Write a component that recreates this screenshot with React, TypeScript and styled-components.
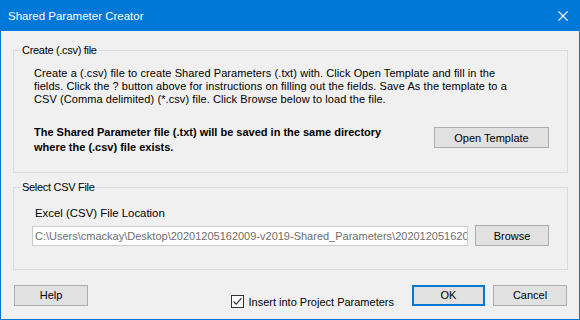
import React from "react";
import styled, { createGlobalStyle } from "styled-components";

const GlobalStyle = createGlobalStyle`
  html, body {
    margin: 0;
    padding: 0;
    background: #ffffff;
  }
  * {
    box-sizing: border-box;
  }
`;

const Window = styled.div`
  width: 580px;
  height: 320px;
  border: 1px solid #0078d7;
  background: #f0f0f0;
  display: flex;
  flex-direction: column;
  font-family: "Liberation Sans", Arial, sans-serif;
  font-size: 11px;
  color: #000;
`;

const TitleBar = styled.div`
  height: 30px;
  background: #0078d7;
  color: #fff;
  display: flex;
  align-items: center;
  justify-content: space-between;
  padding: 0 11px 0 7px;
  font-size: 11.5px;
`;

const CloseIcon = styled.svg`
  width: 10px;
  height: 10px;
`;

const Body = styled.div`
  flex: 1;
  display: flex;
  flex-direction: column;
  padding: 13px 11px 0 12px;
`;

const Group = styled.fieldset<{ $height: number; $gap?: number }>`
  margin: 0 0 ${({ $gap }) => $gap ?? 0}px 0;
  padding: 0;
  height: ${({ $height }) => $height}px;
  border: 1px solid #dcdcdc;
  min-width: 0;
`;

const Legend = styled.legend`
  margin-left: 7px;
  padding: 0 1px;
  line-height: 13px;
  font-size: 11px;
  letter-spacing: -0.3px;
`;

const GroupContent = styled.div`
  padding: 10px 18px 0 20px;
`;

const Paragraph = styled.p`
  margin: 0;
  line-height: 13px;
  white-space: nowrap;
  letter-spacing: 0.08px;
`;

const NoteRow = styled.div`
  display: flex;
  justify-content: space-between;
  align-items: flex-start;
  margin-top: 19px;
`;

const Note = styled.p`
  margin: 0;
  font-weight: bold;
  line-height: 15px;
`;

const Button = styled.button<{ $width: number; $default?: boolean }>`
  width: ${({ $width }) => $width}px;
  height: 21px;
  margin: 0;
  padding: 0;
  background: #e1e1e1;
  border: ${({ $default }) => ($default ? "2px solid #0078d7" : "1px solid #adadad")};
  font-family: "Liberation Sans", Arial, sans-serif;
  font-size: 11px;
  color: #000;
  flex-shrink: 0;
`;

const TemplateButton = styled(Button)`
  margin-top: 2px;
`;

const FieldLabel = styled.div`
  margin: 2px 0 0 1px;
  line-height: 14px;
  font-size: 11.4px;
`;

const FieldRow = styled.div`
  display: flex;
  align-items: flex-start;
  gap: 7px;
  margin-top: 5px;
`;

const PathBox = styled.div`
  width: 436px;
  height: 20px;
  margin: 1px 0 0 -2px;
  border: 1px solid #cccccc;
  background: #fff;
  color: #6d6d6d;
  padding: 0 0 0 2px;
  line-height: 18px;
  white-space: nowrap;
  overflow: hidden;
`;

const Footer = styled.div`
  display: flex;
  align-items: center;
  padding: 12px 1px 0 1px;
`;

const Spacer = styled.div`
  flex: 1;
`;

const CheckLabel = styled.label`
  display: flex;
  align-items: center;
  gap: 4px;
  margin-right: 18px;
  margin-top: 13px;
`;

const CheckBox = styled.span`
  width: 13px;
  height: 13px;
  border: 1px solid #333;
  background: #fff;
  display: flex;
  align-items: center;
  justify-content: center;
`;

const ButtonGroup = styled.div`
  display: flex;
  gap: 8px;
`;

export default function App() {
  return (
    <>
      <GlobalStyle />
      <Window>
        <TitleBar>
          <span>Shared Parameter Creator</span>
          <CloseIcon viewBox="0 0 10 10">
            <path d="M0.5 0.5 L9.5 9.5 M9.5 0.5 L0.5 9.5" stroke="#fff" strokeWidth="1.1" />
          </CloseIcon>
        </TitleBar>
        <Body>
          <Group $height={129} $gap={8}>
            <Legend>Create (.csv) file</Legend>
            <GroupContent>
              <Paragraph>
                Create a (.csv) file to create Shared Parameters (.txt) with. Click Open Template and fill in the
                <br />
                fields. Click the ? button above for instructions on filling out the fields. Save As the template to a
                <br />
                CSV (Comma delimited) (*.csv) file. Click Browse below to load the file.
              </Paragraph>
              <NoteRow>
                <Note>
                  The Shared Parameter file (.txt) will be saved in the same directory
                  <br />
                  where the (.csv) file exists.
                </Note>
                <TemplateButton $width={115}>Open Template</TemplateButton>
              </NoteRow>
            </GroupContent>
          </Group>
          <Group $height={89}>
            <Legend>Select CSV File</Legend>
            <GroupContent>
              <FieldLabel>Excel (CSV) File Location</FieldLabel>
              <FieldRow>
                <PathBox>C:\Users\cmackay\Desktop\20201205162009-v2019-Shared_Parameters\202012051620</PathBox>
                <Button $width={74}>Browse</Button>
              </FieldRow>
            </GroupContent>
          </Group>
          <Footer>
            <Button $width={74}>Help</Button>
            <Spacer />
            <CheckLabel>
              <CheckBox>
                <svg width="11" height="11" viewBox="0 0 11 11">
                  <path d="M1.5 5.5 L4.2 8.2 L9.5 2.2" fill="none" stroke="#333" strokeWidth="1.2" />
                </svg>
              </CheckBox>
              Insert into Project Parameters
            </CheckLabel>
            <ButtonGroup>
              <Button $width={73} $default>OK</Button>
              <Button $width={74}>Cancel</Button>
            </ButtonGroup>
          </Footer>
        </Body>
      </Window>
    </>
  );
}
